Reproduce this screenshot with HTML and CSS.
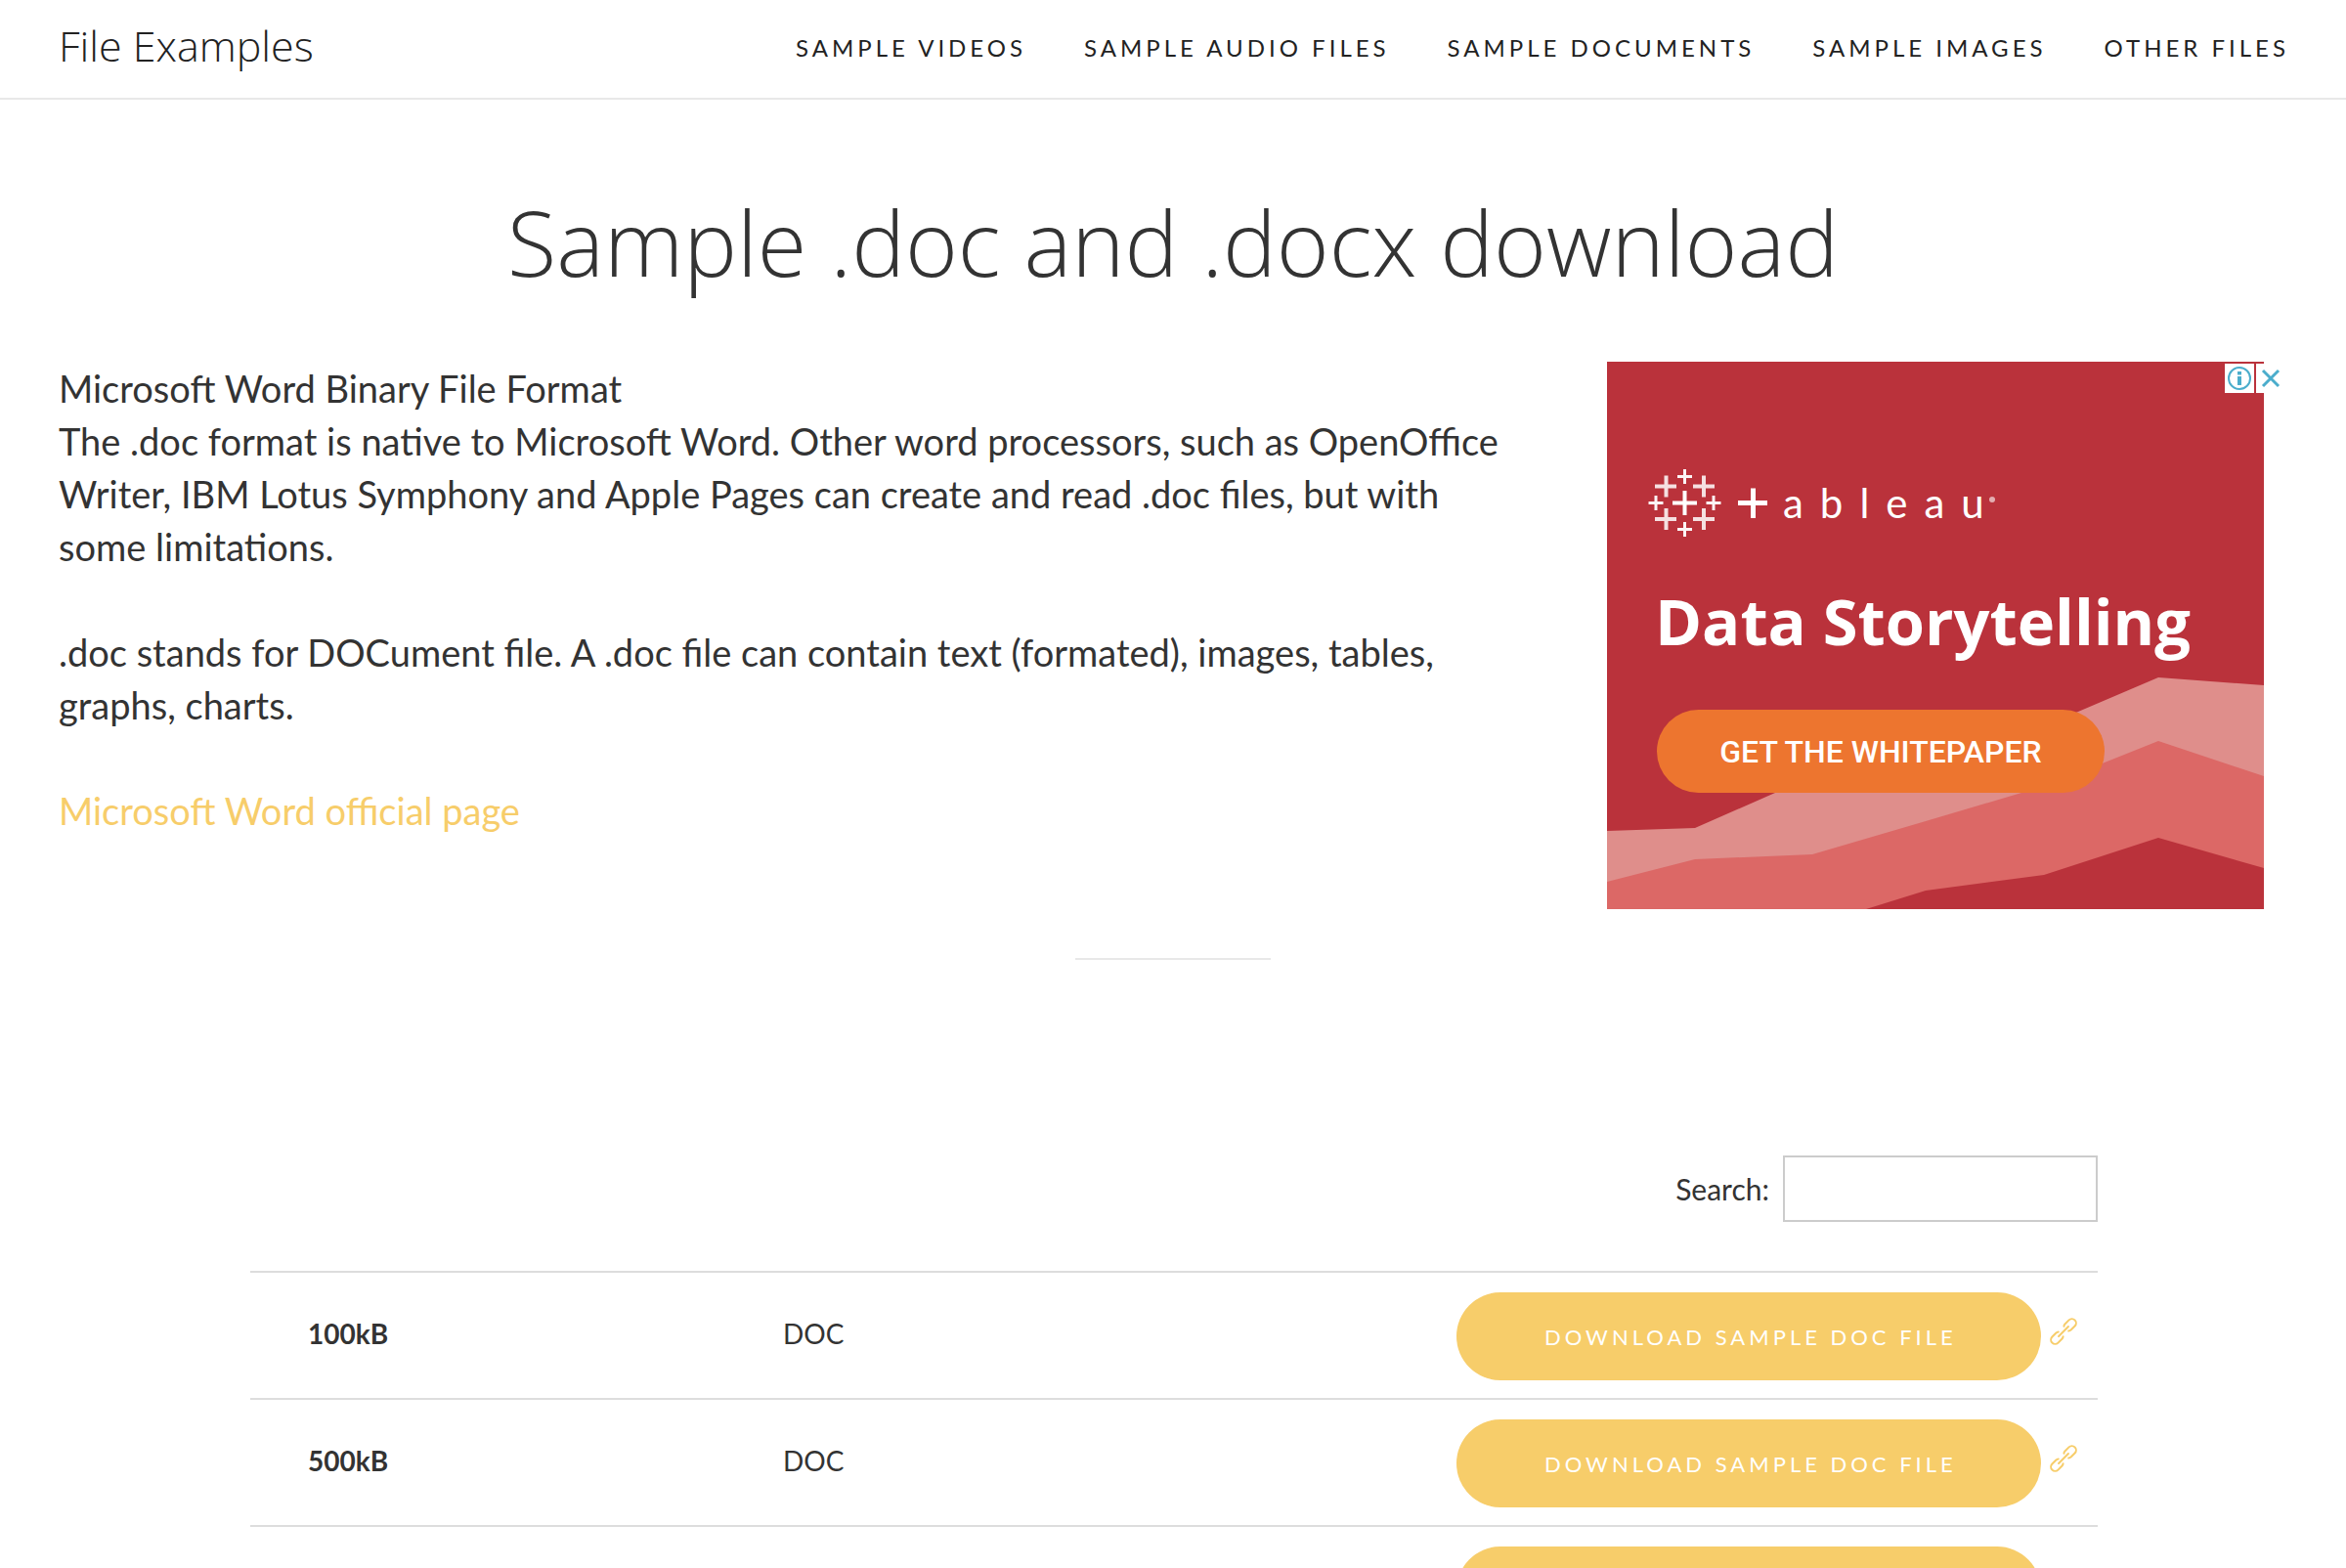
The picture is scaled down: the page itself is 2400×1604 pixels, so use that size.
FILE: index.html
```html
<!DOCTYPE html>
<html lang="en">
<head>
<meta charset="utf-8">
<meta name="viewport" content="width=device-width, initial-scale=1">
<title>Sample .doc and .docx download - File Examples</title>
<link rel="stylesheet" href="styles.css">
</head>
<body>
<svg class="sprite" aria-hidden="true">
  <symbol id="icon-link" viewBox="0 0 28 28">
    <g transform="rotate(-45 14 14)" fill="none" stroke="currentColor" stroke-width="2" stroke-linecap="round">
      <path d="M10 10.6A4.6 4.6 0 0 0 7.6 9.7H1.9A4.3 4.3 0 0 0 1.9 18.3H7.6A4.6 4.6 0 0 0 10 17.4"/>
      <path d="M18 10.6A4.6 4.6 0 0 1 20.4 9.7H26.1A4.3 4.3 0 0 1 26.1 18.3H20.4A4.6 4.6 0 0 1 18 17.4"/>
      <path d="M7 14H21"/>
    </g>
  </symbol>
</svg>

<header class="site-header">
  <a class="site-title" href="#">File Examples</a>
  <nav class="site-nav" aria-label="Main">
    <a href="#">Sample Videos</a>
    <a href="#">Sample Audio Files</a>
    <a href="#">Sample Documents</a>
    <a href="#">Sample Images</a>
    <a href="#">Other Files</a>
  </nav>
</header>

<main class="page">
  <h1 class="page-title">Sample .doc and .docx download</h1>

  <section class="intro">
    <div class="intro-text">
      <p>Microsoft Word Binary File Format<br>The .doc format is native to Microsoft Word. Other word processors, such as OpenOffice Writer, IBM Lotus Symphony and Apple Pages can create and read .doc files, but with some limitations.</p>
      <p>.doc stands for DOCument file. A .doc file can contain text (formated), images, tables, graphs, charts.</p>
      <p><a href="#">Microsoft Word official page</a></p>
    </div>

    <aside class="ad" aria-label="Advertisement">
      <div class="ad-creative">
        <svg class="ad-art" viewBox="0 0 672 560" preserveAspectRatio="none" aria-hidden="true">
          <path fill="#df8e8b" d="M0 480L90 477L172 441L240 410L440 377L482 358L564 323L672 331V560H0Z"/>
          <path fill="#dc6866" d="M0 532L90 509L210 504L326 470L424 441L509 410L564 388L672 424V560H0Z"/>
          <path fill="#ba323b" d="M265 560L326 541L447 525L564 487L672 518V560Z"/>
        </svg>
        <div class="ad-logo">
          <svg width="126" height="70" viewBox="42 109 126 70" fill="none" stroke="#fff" aria-hidden="true">
            <path stroke-width="4" d="M67 144.500H92M79.500 132V157"/>
            <path stroke-width="4" opacity=".85" d="M49 127.500H71M60.500 116.500V138.500M88 127.500H110M99 116.500V138.500M49 161H71M60.500 150V172M88 161H110M99 150V172"/>
            <path stroke-width="3" opacity=".95" d="M72 117.500H87M79.500 110V125M72 171.500H87M79.500 164V179M42.500 144.500H57.500M50 137V152M101.500 144.500H116.500M109 137V152"/>
            <path stroke-width="5" d="M134 144.500H164M149.500 129.500V160"/>
          </svg>
          <span class="ad-wordmark">ableau</span>
          <svg class="ad-mark" width="6" height="6" viewBox="0 0 6 6" aria-hidden="true"><circle cx="3" cy="3" r="3" fill="#fff" opacity=".6"/></svg>
        </div>
        <p class="ad-headline">Data Storytelling</p>
        <a class="ad-cta" href="#">GET THE WHITEPAPER</a>
      </div>
      <div class="ad-choices">
        <button type="button" class="ad-info" aria-label="About this ad">
          <svg width="30" height="30" viewBox="0 0 30 30" aria-hidden="true"><circle cx="15" cy="15" r="11" fill="none" stroke="#4badcc" stroke-width="2"/><path d="M13 13H17V22H13ZM13 8H17V11.500H13Z" fill="#4badcc"/></svg>
        </button>
        <button type="button" class="ad-close" aria-label="Close ad">
          <svg width="32" height="30" viewBox="0 0 32 30" aria-hidden="true"><path d="M7 7L23 23M23 7L7 23" fill="none" stroke="#4badcc" stroke-width="3"/></svg>
        </button>
      </div>
    </aside>
  </section>

  <hr class="divider">

  <section class="downloads">
    <div class="filter">
      <label for="search">Search:</label>
      <input id="search" type="search">
    </div>
    <table class="files">
      <colgroup><col class="col-size"><col class="col-type"><col class="col-action"></colgroup>
      <tbody>
        <tr>
          <th scope="row">100kB</th>
          <td>DOC</td>
          <td class="action"><div class="action-row"><a class="button" href="#">Download sample DOC file</a><a class="permalink" href="#" aria-label="Link to file"><svg width="28" height="28" aria-hidden="true"><use href="#icon-link"/></svg></a></div></td>
        </tr>
        <tr>
          <th scope="row">500kB</th>
          <td>DOC</td>
          <td class="action"><div class="action-row"><a class="button" href="#">Download sample DOC file</a><a class="permalink" href="#" aria-label="Link to file"><svg width="28" height="28" aria-hidden="true"><use href="#icon-link"/></svg></a></div></td>
        </tr>
        <tr>
          <th scope="row">1MB</th>
          <td>DOC</td>
          <td class="action"><div class="action-row"><a class="button" href="#">Download sample DOC file</a><a class="permalink" href="#" aria-label="Link to file"><svg width="28" height="28" aria-hidden="true"><use href="#icon-link"/></svg></a></div></td>
        </tr>
      </tbody>
    </table>
  </section>
</main>
</body>
</html>
```
FILE: styles.css
```css
* {
  box-sizing: border-box;
}

body {
  margin: 0;
  background: #fff;
  color: #333;
  font-family: Lato, "Open Sans", sans-serif;
  font-size: 38px;
  line-height: 54px;
}

a {
  color: #f7cd6a;
  text-decoration: none;
}

.sprite {
  display: none;
}

/* Header */
.site-header {
  display: flex;
  align-items: center;
  justify-content: space-between;
  height: 102px;
  padding: 0 58px 0 60px;
  border-bottom: 2px solid #e8e8e8;
}

.site-title {
  padding-bottom: 6px;
  color: #222;
  font-family: "Open Sans", sans-serif;
  font-size: 43px;
  font-weight: 300;
}

.site-nav {
  display: flex;
  gap: 59px;
  padding-bottom: 2px;
}

.site-nav a {
  color: #222;
  font-size: 24px;
  letter-spacing: 4px;
  text-transform: uppercase;
}

/* Title and introduction */
.page {
  padding: 86px 60px 0;
}

.page-title {
  margin: 0 0 62px;
  font-family: "Open Sans", sans-serif;
  font-size: 92px;
  font-weight: 300;
  line-height: 120px;
  text-align: center;
}

.intro {
  display: grid;
  grid-template-columns: minmax(0, 1fr) 696px;
  gap: 94px;
}

.intro-text p {
  margin: 0 0 54px;
}

/* Advertisement */
.ad {
  position: relative;
}

.ad-creative {
  position: relative;
  width: 672px;
  height: 560px;
  padding: 109px 42px 0;
  background: #ba323b;
  color: #fff;
}

.ad-art {
  position: absolute;
  inset: 0;
  width: 100%;
  height: 100%;
}

.ad-logo {
  display: flex;
  align-items: center;
  gap: 12px;
  height: 70px;
}

.ad-wordmark {
  margin-right: -24px;
  font-size: 42px;
  letter-spacing: 17px;
}

.ad-mark {
  margin-bottom: 6px;
}

.ad-headline {
  margin: 46px 7px 0;
  font-family: "Open Sans", sans-serif;
  font-size: 65px;
  font-weight: 700;
  line-height: 80px;
  white-space: nowrap;
}

.ad-cta {
  position: relative;
  display: flex;
  align-items: center;
  justify-content: center;
  width: 458px;
  height: 85px;
  margin: 51px 9px 0;
  border-radius: 43px;
  background: #ed752f;
  color: #fff;
  font-family: Roboto, sans-serif;
  font-size: 32px;
  font-weight: 500;
}

.ad-choices {
  position: absolute;
  top: 2px;
  right: 0;
  display: flex;
  gap: 2px;
}

.ad-choices button {
  display: flex;
  padding: 0;
  border: 0;
  background: #fff;
}

.divider {
  width: 200px;
  height: 2px;
  margin: 50px auto 200px;
  border: 0;
  background: #e8e8e8;
}

/* Downloads table */
.downloads {
  margin: 0 194px 0 196px;
  font-size: 28px;
  line-height: 36px;
}

.filter {
  display: flex;
  align-items: center;
  justify-content: flex-end;
  gap: 14px;
  margin-bottom: 50px;
}

.filter label {
  font-size: 30px;
}

.filter input {
  width: 322px;
  height: 68px;
  padding: 0 16px;
  border: 2px solid #ccc;
  border-radius: 0;
  background: #fff;
  font: inherit;
  appearance: none;
}

.files {
  width: 100%;
  border-spacing: 0;
  table-layout: fixed;
}

.col-size {
  width: 486px;
}

.col-action {
  width: 656px;
}

.files th,
.files td {
  padding: 18px 0 22px 59px;
  border-top: 2px solid #ddd;
  text-align: left;
}

.files td.action {
  padding: 20px 0 18px;
}

.action-row {
  display: flex;
  align-items: center;
  gap: 9px;
}

.button {
  display: flex;
  align-items: center;
  width: 598px;
  height: 90px;
  padding: 2px 0 0 90px;
  border-radius: 45px;
  background: #f7cd6a;
  color: #fff;
  font-size: 22px;
  letter-spacing: 4px;
  line-height: 28px;
  text-transform: uppercase;
  white-space: nowrap;
}

.permalink {
  display: flex;
  padding-bottom: 10px;
}
```
